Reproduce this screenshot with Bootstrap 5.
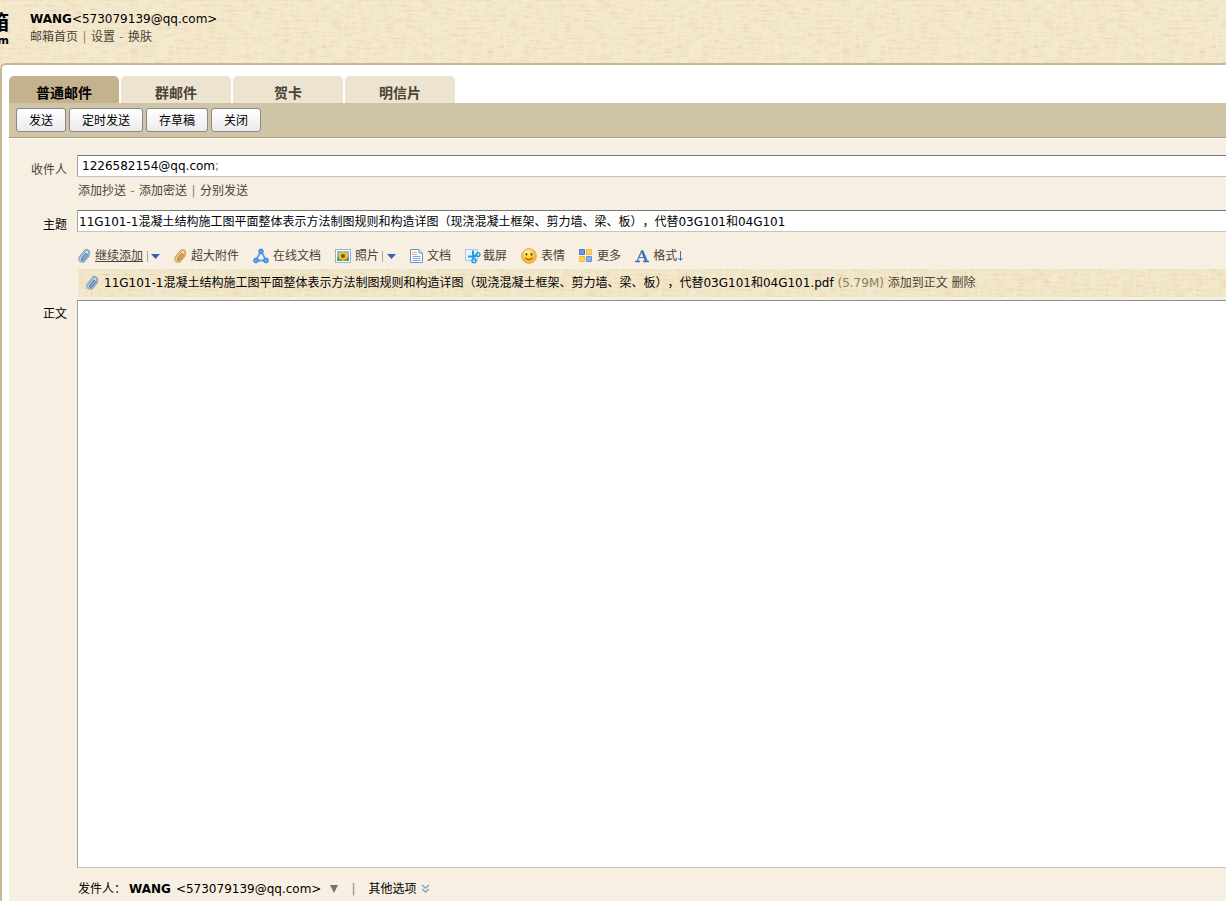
<!DOCTYPE html>
<html lang="zh-CN">
<head>
<meta charset="utf-8">
<meta name="viewport" content="width=device-width, initial-scale=1">
<title>写信 - 邮箱</title>
<link href="https://cdn.jsdelivr.net/npm/bootstrap@5.3.0/dist/css/bootstrap.min.css" rel="stylesheet">
<style>
:root { --linen: url("data:image/svg+xml,%3Csvg xmlns='http://www.w3.org/2000/svg' width='178' height='120'%3E%3Cfilter id='a' x='0' y='0' width='100%25' height='100%25' color-interpolation-filters='sRGB'%3E%3CfeTurbulence type='fractalNoise' baseFrequency='.08 .4' numOctaves='3' seed='5' stitchTiles='stitch'/%3E%3CfeColorMatrix values='0 0 0 0 .87 0 0 0 0 .74 0 0 0 0 .55 1.1 0 0 0 -.52'/%3E%3C/filter%3E%3Cfilter id='b' x='0' y='0' width='100%25' height='100%25' color-interpolation-filters='sRGB'%3E%3CfeTurbulence type='fractalNoise' baseFrequency='.3 .05' numOctaves='3' seed='11' stitchTiles='stitch'/%3E%3CfeColorMatrix values='0 0 0 0 .96 0 0 0 0 .93 0 0 0 0 .83 1.4 0 0 0 -.48'/%3E%3C/filter%3E%3Crect width='178' height='120' filter='url(%23a)'/%3E%3Crect width='178' height='120' filter='url(%23b)'/%3E%3C/svg%3E"); }
body { font: 12px/18px "DejaVu Sans", "Noto Sans CJK SC", sans-serif; color: #000; background: #f3e7cb var(--linen); text-spacing-trim: space-all; }
a, .tool { color: #4b4334; text-decoration: none; }
a:hover, .tool:hover { text-decoration: underline; }
.topbar { height: 63px; }
.brand { width: 9px; padding-top: 11px; }
.brand b { font-size: 20px; line-height: 24px; }
.brand small { font: 700 11px/12px "DejaVu Sans", sans-serif; }
.account { padding: 10px 0 0 21px; }
.linkrow { gap: 4px; }
.linkrow span { width: 5px; text-align: center; }
.muted { color: #8a8068; }
.sheet { border: solid #c4b993; border-width: 2px 0 0 2px; border-top-left-radius: 6px; background: #fff; padding: 11px 0 0 7px; }
.modes { gap: 2px; }
.modes .nav-link { width: 110px; height: 27px; padding: 7px 0 0; border: 0; border-radius: 5px 5px 0 0; background: #ece3d0; color: #4b4334; font-size: 14px; line-height: 18px; font-weight: 700; text-align: center; }
.modes .nav-link.active { background: #c4b28e; color: #000; }
.actions { background: #cfc4a5; border-bottom: 1px solid #aaa27f; padding: 5px 7px; gap: 3px; margin-bottom: 1px; }
.actions .btn { height: 24px; padding: 2px 12px 0; font-size: 12px; line-height: 20px; color: #000; border: 1px solid #888; border-radius: 3px; background: linear-gradient(#fff, #ebebeb); }
.compose { background: #f7efe2; padding-top: 16px; }
.caption { width: 68px; flex: none; padding: 6px 10px 0 0; text-align: right; }
.caption-body { padding-top: 71px; }
.field { height: 22px; border: 1px solid #a5a5a5; border-top-color: #7a7a7a; border-right: 0; border-bottom-color: #c3c3c3; background: #fff; border-radius: 0; font-size: 12px; line-height: 18px; color: #000; outline: 0; }
.subject { padding: 0 1px 2px; }
.address { padding: 1px 0 0 4px; }
.address input { border: 0; outline: 0; background: none; min-width: 0; }
.extra { margin: 5px 0 10px 1px; }
.tools { gap: 14px; height: 35px; padding: 8px 0 0 1px; }
.tool { border: 0; background: none; padding: 0; display: flex; align-items: center; gap: 4px; white-space: nowrap; }
.tool.tight { gap: 2px; }
.tool svg, .attached svg { flex: none; display: block; }
.drop { border: 0; background: none; padding: 0; width: 17px; height: 18px; }
.drop svg { display: block; }
.attached { height: 28px; margin: 0 0 3px 1px; padding-left: 8px; gap: 5px; background: #f1e5c8 var(--linen); white-space: nowrap; }
.letter { resize: none; height: auto; min-height: 200px; padding: 4px; border-top-color: #8c8c8c; }
.sender { height: 33px; padding: 12px 0 0 69px; }
.pick { border: 0; background: none; padding: 0; line-height: 18px; color: #000; }
.from { margin-left: 3px; gap: 5px; }
.split { width: 30px; text-align: center; }
</style>
</head>
<body class="d-flex flex-column vh-100 overflow-hidden">
<svg class="d-none" aria-hidden="true">
  <symbol id="clip" viewBox="0 0 13 16"><g transform="rotate(40 6.500 8)" fill="none" stroke-linecap="round"><path d="M9.500 5v6.500a3 3 0 0 1-6 0V4a2.500 2.500 0 0 1 5 0v7a1.200 1.200 0 0 1-2.400 0V5" stroke="currentColor" stroke-width="1.900"/><path d="M9.500 5v6.500a3 3 0 0 1-6 0V4a2.500 2.500 0 0 1 5 0" stroke="#fff" stroke-opacity=".6" stroke-width=".8"/></g></symbol>
</svg>

<header class="topbar d-flex flex-shrink-0 overflow-hidden">
  <div class="brand d-flex flex-column align-items-end overflow-hidden flex-shrink-0"><b>箱</b><small>m</small></div>
  <div class="account">
    <div><b>WANG</b>&lt;573079139@qq.com&gt;</div>
    <nav class="linkrow d-flex"><a href="#">邮箱首页</a><span class="muted">|</span><a href="#">设置</a><span class="muted">-</span><a href="#">换肤</a></nav>
  </div>
</header>

<main class="sheet flex-grow-1 d-flex flex-column">
  <div class="modes nav flex-nowrap" role="tablist">
    <button class="nav-link active" type="button" role="tab" aria-selected="true">普通邮件</button>
    <button class="nav-link" type="button" role="tab">群邮件</button>
    <button class="nav-link" type="button" role="tab">贺卡</button>
    <button class="nav-link" type="button" role="tab">明信片</button>
  </div>
  <div class="actions d-flex">
    <button class="btn" type="submit" form="mail">发送</button>
    <button class="btn" type="button">定时发送</button>
    <button class="btn" type="button">存草稿</button>
    <button class="btn" type="button">关闭</button>
  </div>

  <form id="mail" class="compose flex-grow-1 d-flex flex-column">
    <div class="d-flex">
      <label class="caption" for="to"><a href="#">收件人</a></label>
      <div class="flex-grow-1">
        <div class="field address d-flex"><span>1226582154@qq.com</span><span class="muted">;</span><input id="to" class="flex-grow-1" type="text"></div>
        <div class="extra linkrow d-flex"><a href="#">添加抄送</a><span class="muted">-</span><a href="#">添加密送</a><span class="muted">|</span><a href="#">分别发送</a></div>
      </div>
    </div>
    <div class="d-flex">
      <label class="caption" for="subject">主题</label>
      <input id="subject" class="field subject flex-grow-1" type="text" value="11G101-1混凝土结构施工图平面整体表示方法制图规则和构造详图（现浇混凝土框架、剪力墙、梁、板），代替03G101和04G101">
    </div>
    <div class="d-flex flex-grow-1">
      <label class="caption caption-body" for="body">正文</label>
      <div class="flex-grow-1 d-flex flex-column overflow-hidden">
        <div class="tools d-flex align-items-center flex-shrink-0">
          <div class="d-flex align-items-center">
            <button class="tool" type="button"><svg width="13" height="16" color="#5b8cc0"><use href="#clip"/></svg><u>继续添加</u></button>
            <button class="drop" type="button" aria-label="更多附件方式"><svg width="17" height="18"><path d="M4.500 4v11" stroke="#aaa798"/><path d="M8 7h9l-4.500 5z" fill="#3b62a8"/></svg></button>
          </div>
          <button class="tool" type="button"><svg width="13" height="16" color="#c78a2c"><use href="#clip"/></svg>超大附件</button>
          <button class="tool" type="button"><svg width="16" height="16" viewBox="0 0 16 16"><path d="M8 3 3 12.500h10z" fill="none" stroke="#5ba2f2" stroke-width="2" stroke-linejoin="round"/><g fill="#5ba2f2" stroke="#2f74cb" stroke-width=".8"><circle cx="8" cy="3.300" r="2.300"/><circle cx="3" cy="12.500" r="2.400"/><circle cx="13" cy="12.500" r="2.400"/></g></svg>在线文档</button>
          <div class="d-flex align-items-center">
            <button class="tool" type="button"><svg width="16" height="16" viewBox="0 0 16 16"><rect x=".5" y="1.500" width="15" height="13" fill="#fff" stroke="#8eb5dc"/><path d="M2 3h12v10H2z" fill="#84b8e5"/><path d="M2 9h12v4H2z" fill="#5c9a54"/><g fill="#f4bd22"><circle cx="8" cy="4.800" r="1.800"/><circle cx="5" cy="6.500" r="1.800"/><circle cx="11" cy="6.500" r="1.800"/><circle cx="5.500" cy="9.800" r="1.800"/><circle cx="10.500" cy="9.800" r="1.800"/><circle cx="8" cy="11" r="1.700"/></g><circle cx="8" cy="8" r="2" fill="#805019"/></svg>照片</button>
            <button class="drop" type="button" aria-label="更多照片方式"><svg width="17" height="18"><path d="M3.500 4v11" stroke="#aaa798"/><path d="M8 7h9l-4.500 5z" fill="#3b62a8"/></svg></button>
          </div>
          <button class="tool" type="button"><svg width="13" height="16" viewBox="0 0 13 16"><path d="M.5 1.500H9l3.500 3.500v9.500H.5z" fill="#fff" stroke="#6794c8"/><path d="M9 1.500V5h3.500" fill="#dceafa" stroke="#6794c8"/><path d="M2 4.500h5m-5 2h5" stroke="#efa27c"/><path d="M2.500 8.500h8m-8 2h8m-8 2h8" stroke="#7aa5d5"/></svg>文档</button>
          <button class="tool tight" type="button"><svg width="16" height="16" viewBox="0 0 16 16"><path d="M.5 1.500h12v11H.5z" fill="#eaf5fe" stroke="#9cc8ee"/><g fill="none" stroke="#209cdf"><path d="M8 2.500v8M3 8.500h8" stroke-width="2"/><path d="m7.500 9 4-2.500" stroke-width="1.500"/><circle cx="13" cy="6.500" r="1.900" stroke-width="1.400"/><circle cx="9" cy="12.800" r="2" stroke-width="1.400"/></g></svg>截屏</button>
          <button class="tool" type="button"><svg width="16" height="16" viewBox="0 0 16 16"><defs><radialGradient id="sun" cx=".4" cy=".25"><stop stop-color="#fff4a2"/><stop offset="1" stop-color="#f9bf38"/></radialGradient></defs><circle cx="8" cy="8" r="7.300" fill="url(#sun)" stroke="#e3a03a"/><ellipse cx="5.500" cy="6.300" rx=".9" ry="1.400" fill="#754315"/><ellipse cx="10.500" cy="6.300" rx=".9" ry="1.400" fill="#754315"/><path d="M4.500 9.800c2 2.300 5 2.300 7 0" fill="none" stroke="#9b5716" stroke-width="1.200"/></svg>表情</button>
          <button class="tool" type="button"><svg width="14" height="16" viewBox="0 0 14 16"><path d="M.5 1.500h5v5h-5z" fill="#6b9be2" stroke="#4678c7"/><path d="M7.500 1.500h5v5h-5zM.5 8.500h5v5h-5z" fill="#ffd45e" stroke="#efb844"/><path d="M7.500 8.500h5v5h-5z" fill="#86aff0" stroke="#6592db"/></svg>更多</button>
          <button class="tool" type="button"><svg width="14" height="16" viewBox="0 0 14 16"><path d="M6.800 2.500 2.300 13M4 9.500h6" fill="none" stroke="#3e70bb" stroke-width="1.200"/><path d="m7 2.500 4.500 11" stroke="#3e70bb" stroke-width="2.500"/><path d="M0 13.500h5m3 0h6" stroke="#3e70bb" stroke-width="1.300"/></svg><span class="d-flex align-items-center">格式<svg width="6" height="12" viewBox="0 0 6 12"><path d="M3.500 1v9M1.500 8l2 2.500 2-2.500" fill="none" stroke="#3e70bb"/></svg></span></button>
        </div>
        <div class="attached d-flex align-items-center flex-shrink-0">
          <svg width="13" height="16" color="#5b8cc0"><use href="#clip"/></svg>
          <span>11G101-1混凝土结构施工图平面整体表示方法制图规则和构造详图（现浇混凝土框架、剪力墙、梁、板），代替03G101和04G101.pdf <span class="muted">(5.79M)</span> <a href="#">添加到正文</a> <a href="#">删除</a></span>
        </div>
        <textarea id="body" class="field letter flex-grow-1"></textarea>
      </div>
    </div>
    <div class="sender d-flex align-items-start flex-shrink-0">
      <span>发件人：</span>
      <button class="pick from d-flex align-items-center" type="button"><b>WANG</b><span>&lt;573079139@qq.com&gt;</span><svg class="ms-1" width="8" height="9"><path d="M0 0h8L4 8z" fill="#81705f"/></svg></button>
      <span class="split muted">|</span>
      <button class="pick d-flex align-items-center" type="button">其他选项<svg class="ms-1" width="11" height="12"><path d="m2 2 3.500 3L9 2M2 6l3.500 3L9 6" fill="none" stroke="#83a4cc" stroke-width="1.500"/></svg></button>
    </div>
  </form>
</main>
<script src="https://cdn.jsdelivr.net/npm/bootstrap@5.3.0/dist/js/bootstrap.bundle.min.js"></script>
</body>
</html>
